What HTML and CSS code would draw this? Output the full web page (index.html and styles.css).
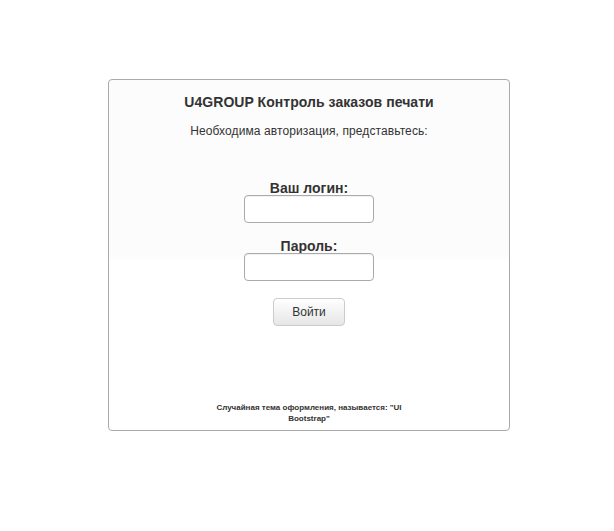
FILE: index.html
```html
<!DOCTYPE html>
<html>
<head>
<meta charset="utf-8">
<link rel="stylesheet" href="styles.css">
</head>
<body>
<div class="box">
  <h1 class="title">U4GROUP Контроль заказов печати</h1>
  <p class="subtitle">Необходима авторизация, представьтесь:</p>
  <form class="form">
    <label class="label">Ваш логин:</label>
    <input class="input" type="text">
    <label class="label">Пароль:</label>
    <input class="input" type="password">
    <button class="btn" type="button">Войти</button>
  </form>
  <p class="footer">Случайная тема оформления, называется: "UI Bootstrap"</p>
</div>
</body>
</html>
```
FILE: styles.css
```css
html, body {
  background: #fff;
}
body {
  margin: 8px;
  font-family: "Liberation Sans", Arial, sans-serif;
  color: #333;
}
.box {
  box-sizing: border-box;
  width: 402px;
  height: 352px;
  margin: 71px 0 0 100px;
  border: 1px solid #aaa;
  border-radius: 4px;
  background: linear-gradient(#fcfcfc, #fcfcfc 50%, #fff 52%, #fff);
  display: flex;
  flex-direction: column;
  align-items: center;
  padding-top: 14px;
}
.title {
  margin: 0;
  font-size: 14px;
  line-height: 17px;
  font-weight: bold;
  letter-spacing: 0.05px;
  color: #333;
}
.subtitle {
  margin: 13px 0 0;
  font-size: 12px;
  line-height: 15px;
  letter-spacing: 0.1px;
  color: #333;
}
.form {
  margin-top: 41px;
  display: flex;
  flex-direction: column;
  align-items: center;
}
.label {
  font-size: 14px;
  line-height: 17px;
  font-weight: bold;
  color: #333;
  margin-bottom: -2px;
}
.input {
  box-sizing: border-box;
  width: 130px;
  height: 28px;
  margin: 0 0 15px;
  border: 1px solid #aaa;
  border-radius: 4px;
  background: #fff;
  box-shadow: inset 0 1px 1px rgba(0,0,0,0.06);
  padding: 0 6px;
}
.btn {
  box-sizing: border-box;
  width: 72px;
  height: 28px;
  margin-top: 2px;
  border: 1px solid #ccc;
  border-radius: 4px;
  background: linear-gradient(#fff, #e6e6e6);
  font-family: "Liberation Sans", Arial, sans-serif;
  font-size: 12px;
  color: #333;
  padding: 0;
}
.footer {
  margin: auto 0 6px;
  width: 196px;
  text-align: center;
  font-size: 8px;
  line-height: 11px;
  font-weight: bold;
  color: #333;
}
```
